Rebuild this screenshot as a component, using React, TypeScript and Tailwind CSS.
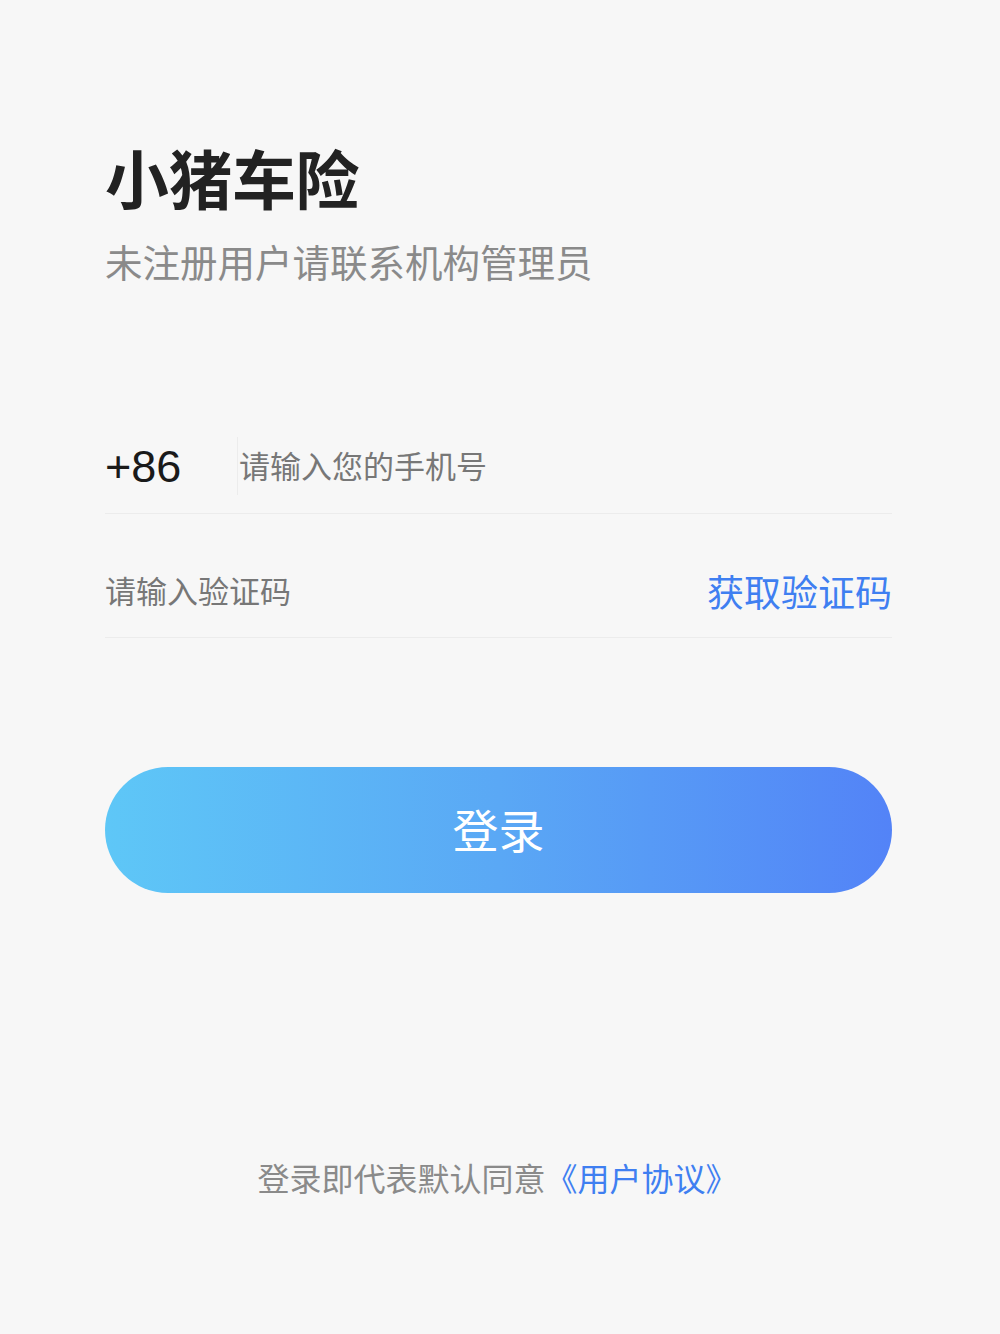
import { useState } from "react";

const font = { fontFamily: '"Noto Sans CJK SC", "Noto Sans", sans-serif' };

export default function App() {
  const [phone, setPhone] = useState("");
  const [code, setCode] = useState("");

  return (
    <div className="min-h-[1334px] w-full bg-[#f7f7f7]" style={font}>
      <div className="pl-[105px] pr-[108px] pt-[144px]">
        {/* Heading */}
        <h1 className="text-[64px] leading-[64px] font-bold text-[#222222] tracking-[-0.5px]">小猪车险</h1>
        <p className="mt-[34px] text-[37.5px] leading-[37px] text-[#8a8a8a]">未注册用户请联系机构管理员</p>

        {/* Phone row */}
        <div className="mt-[158px] pb-[18px] border-b border-[#ececec]">
          <div className="flex items-center h-[58px]">
            <span className="w-[132px] text-[45px] leading-[45px] text-[#1a1a1a] font-['Liberation_Sans',sans-serif]">+86</span>
            <div className="w-px h-[58px] bg-[#ececec]" />
            <input
              value={phone}
              onChange={(e) => setPhone(e.target.value)}
              placeholder="请输入您的手机号"
              className="ml-[1px] flex-1 bg-transparent outline-none text-[31px] leading-[40px] text-[#333] placeholder:text-[#777777] -mt-[2px]"
              style={font}
            />
          </div>
        </div>

        {/* Code row */}
        <div className="pt-[48px] pb-[17px] border-b border-[#ececec]">
          <div className="flex items-center justify-between h-[58px]">
            <input
              value={code}
              onChange={(e) => setCode(e.target.value)}
              placeholder="请输入验证码"
              className="flex-1 bg-transparent outline-none text-[31px] leading-[40px] text-[#333] placeholder:text-[#777777] -mt-[3px]"
              style={font}
            />
            <button className="text-[37px] leading-[40px] text-[#3f7ff1]" style={font}>获取验证码</button>
          </div>
        </div>

        {/* Login button */}
        <button
          className="mt-[129px] w-full h-[126px] rounded-full bg-gradient-to-r from-[#5ec7f7] via-[#5aa8f5] to-[#5383f7] text-white text-[46px] leading-[46px] pb-[4px]"
          style={font}
        >
          登录
        </button>

        {/* Agreement */}
        <p className="mt-[268px] text-center text-[32px] leading-[32px] text-[#8a8a8a] pr-[2px]">
          登录即代表默认同意<span className="text-[#3f7ff1]">《用户协议》</span>
        </p>
      </div>
    </div>
  );
}
